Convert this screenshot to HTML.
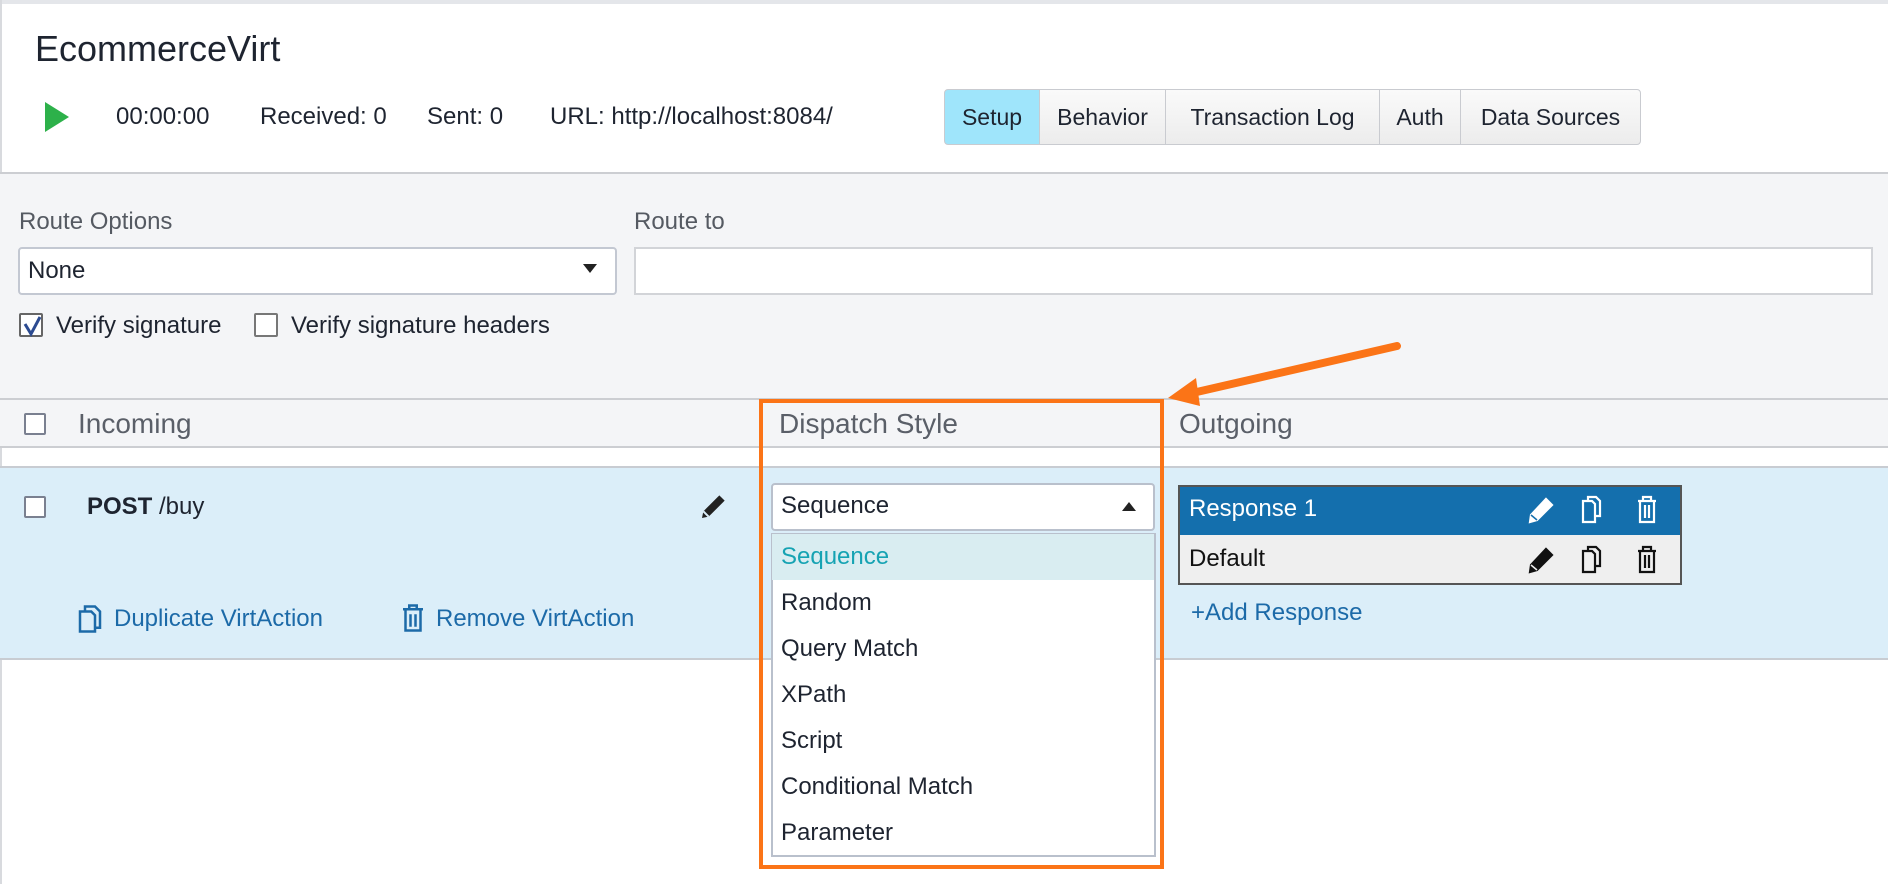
<!DOCTYPE html>
<html><head><meta charset="utf-8"><style>
*{box-sizing:border-box;margin:0;padding:0}
body{width:1888px;height:884px;background:#fff;font-family:"Liberation Sans",sans-serif;color:#1e2430;position:relative;overflow:hidden;font-size:23px}
.a{position:absolute;white-space:nowrap}
.tab{position:absolute;top:89px;height:56px;border:1px solid #c9cbd0;background:linear-gradient(#fafafa,#ececec);font-size:23px;line-height:54px;text-align:center;color:#1e2430}
.cb{position:absolute;width:24px;height:24px;border:2px solid #888;background:#fff;border-radius:2px}
.item{position:absolute;left:772px;width:382px;height:46px;line-height:46px;padding-left:9px;font-size:24px}
</style></head><body>
<div class="a" style="left:0;top:0;width:1888px;height:4px;background:#e4e6ea"></div>
<div class="a" style="left:0;top:0;width:2px;height:884px;background:#d8dade"></div>
<div class="a" style="left:35px;top:28px;font-size:36px;color:#1e2430">EcommerceVirt</div>
<svg class="a" style="left:44px;top:101px" width="26" height="32"><polygon points="1,1 25,16 1,31" fill="#2db14a"/></svg>
<div class="a" style="left:116px;top:103px;font-size:24px">00:00:00</div>
<div class="a" style="left:260px;top:103px;font-size:24px">Received: 0</div>
<div class="a" style="left:427px;top:103px;font-size:24px">Sent: 0</div>
<div class="a" style="left:550px;top:103px;font-size:24px">URL: http://localhost:8084/</div>
<div class="tab" style="left:944px;width:96px;background:#9fe5fb;border-radius:4px 0 0 4px">Setup</div>
<div class="tab" style="left:1039px;width:127px">Behavior</div>
<div class="tab" style="left:1165px;width:215px">Transaction Log</div>
<div class="tab" style="left:1379px;width:82px">Auth</div>
<div class="tab" style="left:1460px;width:181px;border-radius:0 4px 4px 0">Data Sources</div>
<div class="a" style="left:0;top:172px;width:1888px;height:226px;background:#f4f5f7;border-top:2px solid #ccced2"></div>
<div class="a" style="left:19px;top:208px;color:#555a62;font-size:24px">Route Options</div>
<div class="a" style="left:634px;top:208px;color:#555a62;font-size:24px">Route to</div>
<div class="a" style="left:18px;top:247px;width:599px;height:48px;background:#fff;border:2px solid #c3c8d2;border-radius:4px"></div>
<div class="a" style="left:28px;top:257px;font-size:24px">None</div>
<svg class="a" style="left:583px;top:264px" width="14" height="10"><polygon points="0,0 14,0 7,9" fill="#222"/></svg>
<div class="a" style="left:634px;top:247px;width:1239px;height:48px;background:#fff;border:2px solid #d2d4d8"></div>
<div class="cb" style="left:19px;top:313px;border-color:#666"></div>
<svg class="a" style="left:21px;top:314px" width="22" height="24"><path d="M4 10 L10 20 L19 3" stroke="#2c4b91" stroke-width="3" fill="none"/></svg>
<div class="a" style="left:56px;top:312px;font-size:24px">Verify signature</div>
<div class="cb" style="left:254px;top:313px;border-color:#777"></div>
<div class="a" style="left:291px;top:312px;font-size:24px">Verify signature headers</div>
<div class="a" style="left:0;top:398px;width:1888px;height:50px;background:#f4f5f7;border-top:2px solid #ccced2;border-bottom:2px solid #ccced2"></div>
<div class="cb" style="left:24px;top:413px;width:22px;height:22px;border-color:#7a8090"></div>
<div class="a" style="left:78px;top:408px;font-size:28px;color:#5a5f68">Incoming</div>
<div class="a" style="left:779px;top:408px;font-size:28px;color:#5a5f68">Dispatch Style</div>
<div class="a" style="left:1179px;top:408px;font-size:28px;color:#5a5f68">Outgoing</div>
<div class="a" style="left:0;top:466px;width:1888px;height:194px;background:#dbeef9;border-top:2px solid #c8ccd2;border-bottom:2px solid #c8ccd2"></div>
<div class="cb" style="left:24px;top:496px;width:22px;height:22px;border-color:#7a8090"></div>
<div class="a" style="left:87px;top:493px;font-size:24px"><b>POST</b> /buy</div>
<svg class="a" style="left:698px;top:490px" width="32" height="32" viewBox="0 0 24 24"><path d="M3 21 L4 16 L16 4 L20 8 L8 20 Z" fill="#222"/><path d="M4 16 L8 20" stroke="#dbeef9" stroke-width="1.5"/></svg>
<svg class="a" style="left:77px;top:604px" width="26" height="30" viewBox="0 0 20 24"><path d="M6 5 V2 H14 L18 6 V19 H14 M2 6 H11 L14 9 V22 H2 Z" fill="none" stroke="#1c6aa8" stroke-width="2"/></svg>
<div class="a" style="left:114px;top:605px;font-size:24px;color:#1c6aa8">Duplicate VirtAction</div>
<svg class="a" style="left:400px;top:603px" width="26" height="30" viewBox="0 0 20 24"><path d="M2 5 H18 M7 5 V2 H13 V5 M4 5 V22 H16 V5 M8 9 V19 M12 9 V19" fill="none" stroke="#1c6aa8" stroke-width="2"/></svg>
<div class="a" style="left:436px;top:605px;font-size:24px;color:#1c6aa8">Remove VirtAction</div>
<div class="a" style="left:771px;top:483px;width:384px;height:48px;background:#fff;border:2px solid #b9c0cc;border-radius:4px"></div>
<div class="a" style="left:781px;top:492px;font-size:24px">Sequence</div>
<svg class="a" style="left:1122px;top:502px" width="14" height="9"><polygon points="0,9 14,9 7,0" fill="#222"/></svg>
<div class="a" style="left:771px;top:533px;width:385px;height:324px;background:#fff;border:2px solid #b9c0cc"></div>
<div class="item" style="top:534px;background:#d9edf1;color:#16a3b3">Sequence</div>
<div class="item" style="top:580px">Random</div>
<div class="item" style="top:626px">Query Match</div>
<div class="item" style="top:672px">XPath</div>
<div class="item" style="top:718px">Script</div>
<div class="item" style="top:764px">Conditional Match</div>
<div class="item" style="top:810px">Parameter</div>
<div class="a" style="left:759px;top:399px;width:405px;height:470px;border:4px solid #fb7417"></div>
<svg class="a" style="left:1160px;top:330px" width="250" height="80"><line x1="237" y1="16" x2="28" y2="64" stroke="#fb7417" stroke-width="8" stroke-linecap="round"/><polygon points="8,68 36,48 40,76" fill="#fb7417"/></svg>
<div class="a" style="left:1178px;top:485px;width:504px;height:100px;border:2px solid #555;background:#efefef"></div>
<div class="a" style="left:1180px;top:487px;width:500px;height:48px;background:#146fad"></div>
<div class="a" style="left:1189px;top:495px;font-size:24px;color:#fff">Response 1</div>
<div class="a" style="left:1189px;top:545px;font-size:24px;color:#111">Default</div>
<svg class="a" style="left:1527px;top:494px" width="140" height="84" viewBox="0 0 140 84">
<g fill="#fff" stroke="#fff" stroke-width="2.2"><path d="M3 28 L4 21 L19 5 L25 11 L10 26 Z"/><path fill="none" d="M61 6 V3 H69 L73 7 V22 H69 M56 7 H65 L68 10 V28 H56 Z"/><path fill="none" d="M111 7 H129 M116 7 V3 H124 V7 M113 7 V28 H127 V7 M118 11 V24 M122 11 V24"/></g>
<path d="M4 21 L10 26" stroke="#146fad" stroke-width="1.5"/>
<g transform="translate(0,50)" fill="#111" stroke="#111" stroke-width="2.2"><path d="M3 28 L4 21 L19 5 L25 11 L10 26 Z"/><path fill="none" d="M61 6 V3 H69 L73 7 V22 H69 M56 7 H65 L68 10 V28 H56 Z"/><path fill="none" d="M111 7 H129 M116 7 V3 H124 V7 M113 7 V28 H127 V7 M118 11 V24 M122 11 V24"/></g>
<path d="M4 71 L10 76" stroke="#efefef" stroke-width="1.5"/>
</svg>
<div class="a" style="left:1191px;top:599px;font-size:24px;color:#1c6aa8">+Add Response</div>
</body></html>
